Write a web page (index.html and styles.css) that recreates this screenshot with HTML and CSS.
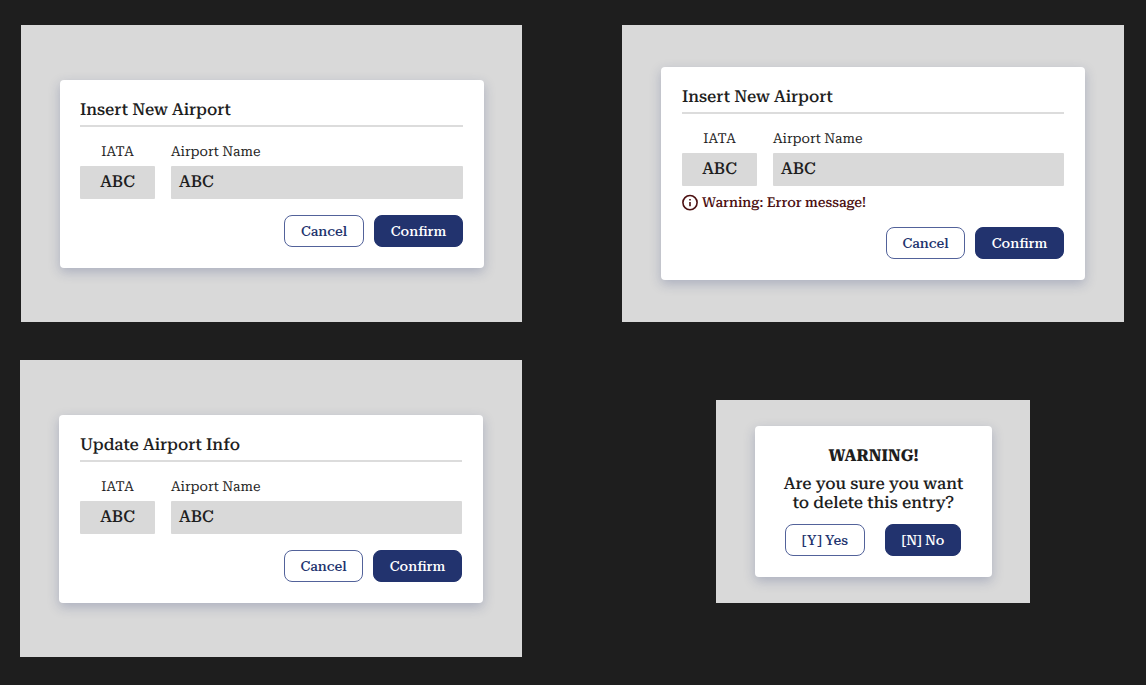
FILE: index.html
```html
<!DOCTYPE html>
<html lang="en">
<head>
<meta charset="utf-8">
<title>Airport dialogs</title>
<link rel="stylesheet" href="styles.css">
</head>
<body>
<main class="board">
  <section class="stage">
    <div class="card card-insert">
      <h2 class="title">Insert New Airport</h2>
      <div class="fields">
        <div class="field code"><span class="label">IATA</span><div class="input">ABC</div></div>
        <div class="field name"><span class="label">Airport Name</span><div class="input">ABC</div></div>
      </div>
      <div class="actions"><button class="btn cancel">Cancel</button><button class="btn primary confirm">Confirm</button></div>
    </div>
  </section>
  <section class="stage stage-error">
    <div class="card card-error">
      <h2 class="title">Insert New Airport</h2>
      <div class="fields">
        <div class="field code"><span class="label">IATA</span><div class="input">ABC</div></div>
        <div class="field name"><span class="label">Airport Name</span><div class="input">ABC</div></div>
      </div>
      <p class="error"><svg class="icon" viewBox="0 0 16 16" fill="none" stroke="currentColor" stroke-width="1.6"><circle cx="8" cy="7.6" r="7.1"/><path d="M8 6.9V11.2M8 3.9V5.6"/></svg><span>Warning: Error message!</span></p>
      <div class="actions"><button class="btn cancel">Cancel</button><button class="btn primary confirm">Confirm</button></div>
    </div>
  </section>
  <section class="stage stage-update">
    <div class="card card-update">
      <h2 class="title">Update Airport Info</h2>
      <div class="fields">
        <div class="field code"><span class="label">IATA</span><div class="input">ABC</div></div>
        <div class="field name"><span class="label">Airport Name</span><div class="input">ABC</div></div>
      </div>
      <div class="actions"><button class="btn cancel">Cancel</button><button class="btn primary confirm">Confirm</button></div>
    </div>
  </section>
  <section class="stage stage-small">
    <div class="card card-small">
      <h2 class="alert">WARNING!</h2>
      <p class="question">Are you sure you want<br>to delete this entry?</p>
      <div class="choices"><button class="btn yes">[Y] Yes</button><button class="btn primary no">[N] No</button></div>
    </div>
  </section>
</main>
</body>
</html>
```

FILE: styles.css
```css
* { box-sizing: border-box; }
body {
  margin: 0;
  background: #1e1e1e;
  color: #1e1e1e;
  font-family: "Roboto Serif", "DejaVu Serif Condensed", "DejaVu Serif", serif;
  text-rendering: geometricPrecision;
}
h2, p { margin: 0; font-weight: 400; }
.board {
  width: 1146px;
  height: 685px;
  padding: 25px 22px 0 21px;
  display: grid;
  grid-template-columns: 501px 502px;
  grid-template-rows: 297px 297px;
  column-gap: 100px;
  row-gap: 38px;
  overflow: hidden;
}
.stage {
  background: #d9d9d9;
  padding: 55px 38px 0 39px;
}
.stage-error { padding: 42px 39px 0; }
.stage-update { margin-left: -1px; padding-right: 39px; }
.stage-small {
  width: 314px;
  height: 203px;
  margin: 40px 0 0 94px;
  padding: 26px 38px 0 39px;
}
.card {
  height: 188px;
  padding: 20px 21px 0;
  background: #fff;
  border-radius: 4px;
  box-shadow: 0 4px 12px rgba(34, 51, 110, .25);
}
.card-insert { padding-left: 20px; }
.card-error { height: 213px; }
.card-small { height: 151px; padding: 21px 0 0; text-align: center; }
.title {
  height: 27px;
  border-bottom: 2px solid #dcdcdc;
  font-size: 16.5px;
  font-weight: 500;
  line-height: 21px;
  white-space: nowrap;
}
.fields { display: flex; gap: 16px; padding-top: 15px; }
.code { width: 75px; text-align: center; }
.name { flex: 1; }
.label { display: block; height: 24px; font-size: 13.7px; line-height: 20px; }
.input {
  height: 33px;
  padding: 0 8px;
  background: #d9d9d9;
  border-radius: 1px;
  font-size: 16.5px;
  font-weight: 500;
  line-height: 34px;
}
.code .input { padding: 0; }
.error {
  display: flex;
  align-items: center;
  gap: 4px;
  height: 16px;
  margin: 9px 0 0;
  color: #4d1112;
  font-size: 13.75px;
  font-weight: 500;
  line-height: 16px;
  white-space: nowrap;
}
.icon { width: 16px; height: 16px; flex: none; overflow: visible; }
.actions { display: flex; justify-content: flex-end; gap: 10px; margin-top: 16px; }
.btn {
  height: 32px;
  padding: 0;
  background: #fff;
  border: 1px solid #52629a;
  border-radius: 8px;
  color: #22336e;
  font: inherit;
  font-size: 13.75px;
  font-weight: 500;
  line-height: 30px;
  white-space: nowrap;
}
.primary { background: #22336e; border-color: #22336e; color: #fff; }
.cancel { width: 80px; }
.card-error .cancel, .card-update .cancel { width: 79px; }
.confirm { width: 89px; }
.yes { width: 80px; }
.no { width: 76px; }
.alert { font-size: 16.5px; line-height: 19px; font-weight: 700; }
.question {
  margin-top: 9px;
  font-size: 16.5px;
  font-weight: 500;
  line-height: 19px;
  white-space: nowrap;
}
.choices { display: flex; justify-content: center; gap: 20px; margin-top: 11px; padding-right: 1px; }
```
